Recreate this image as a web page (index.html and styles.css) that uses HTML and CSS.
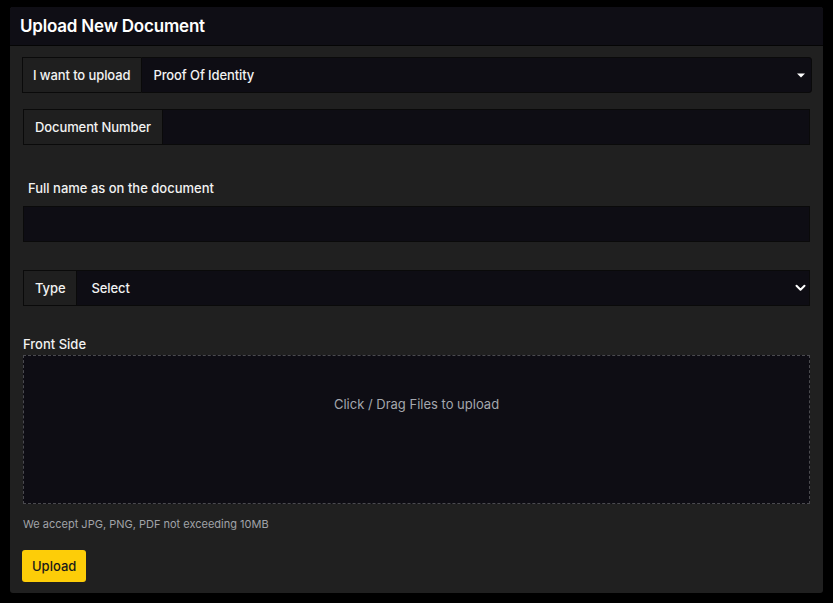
FILE: index.html
```html
<!DOCTYPE html>
<html>
	<head>
		<meta charset="utf-8">
		<title>Upload New Document</title>
		<link rel="stylesheet" href="styles.css">
	</head>
	<body>
		<div class="card">
			<div class="card-header">Upload New Document</div>
			<div class="card-body">
				<!-- 上传类型 -->
				<div class="group group-first">
					<div class="addon">I want to upload</div>
					<div class="field select rounded">
						<span>Proof Of Identity</span>
						<svg class="caret" width="8" height="5" viewBox="0 0 8 5"><path d="M0 0.5h8L4 4.5z" fill="#fff"/></svg>
					</div>
				</div>

				<div class="group">
					<div class="addon">Document Number</div>
					<div class="field"></div>
				</div>

				<div class="label name-label">Full name as on the document</div>
				<div class="field solo"></div>

				<div class="group type-group">
					<div class="addon">Type</div>
					<div class="field select">
						<span class="select-text">Select</span>
						<svg class="chevron" width="11" height="8" viewBox="0 0 11 8"><path d="M1.5 1.8l4 4 4-4" fill="none" stroke="#fff" stroke-width="2" stroke-linecap="round" stroke-linejoin="round"/></svg>
					</div>
				</div>

				<div class="label front-label">Front Side</div>
				<div class="dropzone">Click / Drag Files to upload</div>
				<div class="note">We accept JPG, PNG, PDF not exceeding 10MB</div>

				<button class="btn">Upload</button>
			</div>
		</div>
	</body>
</html>
```

FILE: styles.css
```css
* {
	margin: 0;
	padding: 0;
	box-sizing: border-box;
}
body {
	background: #000;
	font-family: Inter, "Noto Sans", sans-serif;
	color: #f2f2f2;
	padding: 7px 10px 0 10px;
}
.card {
	width: 813px;
	background: #202020;
	border-radius: 3px;
	overflow: hidden;
}
.card-header {
	height: 39px;
	background: #0f0e15;
	border-bottom: 1px solid #050505;
	padding: 0 10px;
	display: flex;
	align-items: center;
	font-size: 17px;
	font-weight: 600;
	letter-spacing: -0.2px;
	color: #fff;
}
.card-body {
	padding: 11px 13px 11px 13px;
}

/* 输入组 */
.group {
	display: flex;
	height: 36px;
	margin-bottom: 33px;
}
.group-first {
	margin: 0 -2px 16px -1px;
}
.addon {
	display: flex;
	align-items: center;
	padding: 0 11px;
	background: #1f1f1f;
	border: 1px solid #0a0a0a;
	border-right: none;
	font-size: 13px;
	font-weight: 500;
	letter-spacing: -0.1px;
	white-space: nowrap;
}
.group-first .addon {
	padding: 0 11px 0 10px;
}
.field {
	flex: 1;
	height: 36px;
	background: #0e0d14;
	border: 1px solid #0a0a0a;
}
.field.rounded {
	border-radius: 0 3px 3px 0;
}
.select {
	display: flex;
	align-items: center;
	justify-content: space-between;
	padding: 0 6px 0 11px;
	font-size: 13px;
	font-weight: 500;
	letter-spacing: -0.1px;
}
.select-text {
	padding-left: 3px;
}
.type-group .select {
	padding-right: 3px;
}
.type-group {
	margin-top: 28px;
	margin-bottom: 28px;
}

.label {
	font-size: 13px;
	font-weight: 500;
	line-height: 20px;
}
.name-label {
	padding-left: 5px;
	margin-bottom: 8px;
}
.front-label {
	margin-bottom: 1px;
}
.solo {
	flex: none;
}

/* 上传区域 */
.dropzone {
	height: 149px;
	background: #0e0d14;
	border: 1px dashed #4a4a4f;
	display: flex;
	justify-content: center;
	padding-top: 40px;
	font-size: 13px;
	color: #a4a7ad;
}
.note {
	margin-top: 12px;
	font-size: 11px;
	line-height: 16px;
	color: #a0a3a8;
}
.btn {
	margin: 18px 0 0 -1px;
	height: 32px;
	padding: 0 10px;
	background: #fdcd08;
	border: none;
	border-radius: 3px;
	font-family: Inter, "Noto Sans", sans-serif;
	font-size: 13px;
	font-weight: 500;
	color: #1a1a1a;
	display: block;
}
```
